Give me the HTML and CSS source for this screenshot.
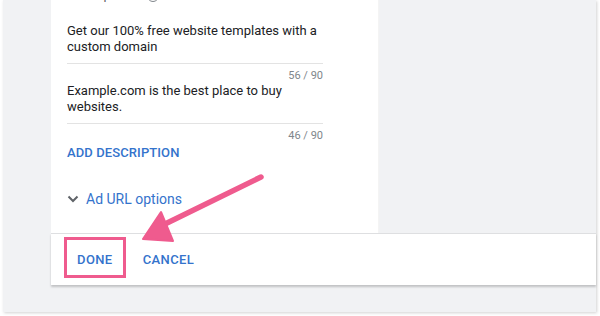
FILE: index.html
```html
<!DOCTYPE html>
<html lang="en">
<head>
    <meta charset="UTF-8">
    <meta name="viewport" content="width=device-width, initial-scale=1.0">
    <title>Edit Ad</title>
    <link rel="stylesheet" href="styles.css">
</head>
<body>
    <div class="window">
        <div class="editor">
            <div class="content">
                <div class="panel">
                    <div class="panel-scroll">
                        <div class="field-label">Description 2 <span class="info">i</span></div>

                        <div class="field">
                            <div class="field-text">Get our 100% free website templates with a custom domain</div>
                            <div class="counter">56 / 90</div>
                        </div>

                        <div class="field">
                            <div class="field-text">Example.com is the best place to buy websites.</div>
                            <div class="counter">46 / 90</div>
                        </div>

                        <a class="add-link" href="#">ADD DESCRIPTION</a>

                        <div class="url-options">
                            <svg class="chevron" width="12" height="8" viewBox="0 0 12 8">
                                <path d="M1.5 1.5 L6 6 L10.5 1.5" fill="none" stroke="#5f6368" stroke-width="2"/>
                            </svg>
                            <span>Ad URL options</span>
                        </div>
                    </div>
                </div>
                <div class="preview"></div>
            </div>
            <div class="footer">
                <button class="btn highlighted">DONE</button>
                <button class="btn">CANCEL</button>
            </div>
        </div>

        <!-- annotation arrow -->
        <svg class="arrow" width="600" height="316" viewBox="0 0 600 316">
            <line x1="261" y1="177" x2="165" y2="224" stroke="#ef5b8e" stroke-width="5.5" stroke-linecap="round"/>
            <polygon points="143,239 161,212 173,241" fill="#ef5b8e" stroke="#ef5b8e" stroke-width="2" stroke-linejoin="round"/>
        </svg>
    </div>
</body>
</html>
```

FILE: styles.css
```css
* {
    margin: 0;
    padding: 0;
    box-sizing: border-box;
}

body {
    width: 600px;
    height: 316px;
    background-color: #fff;
    font-family: Roboto, "Liberation Sans", Arial, sans-serif;
    overflow: hidden;
}

.window {
    position: relative;
    width: 593px;
    height: 312px;
    margin-left: 3px;
    background-color: #f1f2f4;
    box-shadow: 1px 1px 3px rgba(0, 0, 0, 0.18);
}

.editor {
    margin-left: 48px;
    display: flex;
    flex-direction: column;
}

.content {
    display: flex;
    height: 233px;
}

.panel {
    width: 328px;
    background-color: #fff;
    overflow: hidden;
    border-right: 1px solid #f4f4f4;
}

.panel-scroll {
    padding-left: 16px;
    width: 272px;
}

/* label of the field above, scrolled mostly out of view */
.field-label {
    margin-top: -13px;
    line-height: 16px;
    font-size: 13px;
    color: #5f6368;
}

.info {
    display: inline-block;
    width: 12px;
    height: 12px;
    border: 1px solid #80868b;
    border-radius: 50%;
    font-size: 9px;
    line-height: 10px;
    text-align: center;
}

.field {
    margin-top: 20px;
}

.field + .field {
    margin-top: 0;
}

.field-text {
    font-size: 13px;
    line-height: 16px;
    color: #202124;
    padding-bottom: 8px;
    border-bottom: 1px solid #e3e3e3;
}

.counter {
    margin-top: 5px;
    line-height: 14px;
    font-size: 11px;
    color: #80868b;
    text-align: right;
}

.add-link {
    display: block;
    margin-top: 2px;
    line-height: 16px;
    font-size: 13px;
    font-weight: 500;
    color: #3473cc;
    text-decoration: none;
    letter-spacing: 0.1px;
}

.url-options {
    display: flex;
    align-items: center;
    gap: 7px;
    margin-top: 30px;
    line-height: 16px;
    font-size: 14px;
    color: #3473cc;
}

.preview {
    flex: 1;
    background-color: #f1f2f4;
}

.footer {
    display: flex;
    align-items: flex-start;
    gap: 14px;
    height: 52px;
    padding: 3px 0 0 13px;
    background-color: #fff;
    border-top: 1px solid #dedfe1;
    box-shadow: 0 2px 2px rgba(0, 0, 0, 0.2);
}

.btn {
    height: 41px;
    padding: 3px 10px 0;
    border: 3px solid transparent;
    background: none;
    font-family: Roboto, "Liberation Sans", Arial, sans-serif;
    font-size: 13px;
    font-weight: 500;
    letter-spacing: 0.4px;
    color: #3473cc;
    cursor: pointer;
}

.btn + .btn {
    padding-left: 0;
}

.highlighted {
    border-color: #ef5b8e;
}

.arrow {
    position: absolute;
    left: -3px;
    top: 0;
    pointer-events: none;
}
```
